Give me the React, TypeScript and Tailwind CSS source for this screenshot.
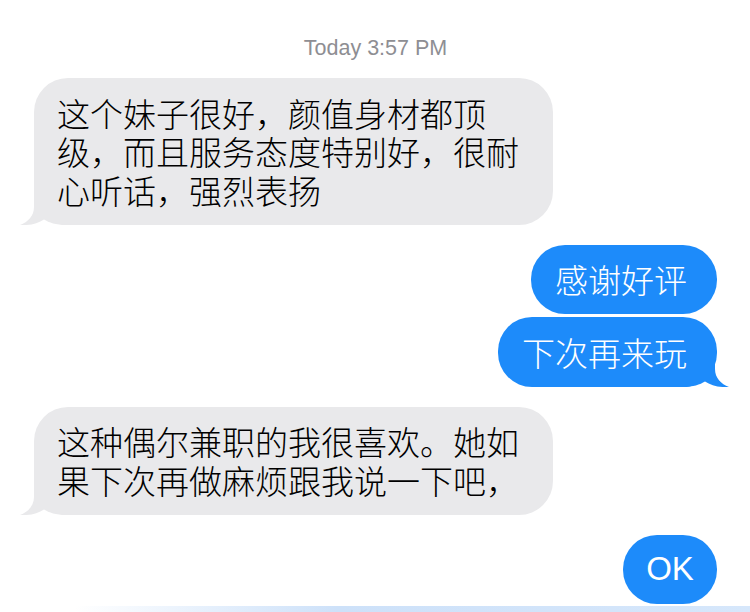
const cjk = '"Noto Sans CJK SC", "Noto Sans", sans-serif';

function Tail({ color, side }: { color: string; side: 'left' | 'right' }) {
  return (
    <svg
      width="50"
      height="34"
      viewBox="0 0 50 34"
      className={
        side === 'left'
          ? 'absolute bottom-0 left-[-14px]'
          : 'absolute bottom-0 right-[-12px] -scale-x-100'
      }
    >
      <path
        d="M14 0 L14 16 C14 25 8 31 0 34 C10 34.6 18 32.5 24 28.5 C29 31.5 36 34 46 34 L50 34 L50 0 Z"
        fill={color}
      />
    </svg>
  );
}

function Received({ text, className = '' }: { text: string; className?: string }) {
  return (
    <div
      className={`relative w-[519px] rounded-[34px] bg-[#e9e9eb] pl-[23px] pr-[28px] py-[15.5px] text-[33px] font-light leading-[38.5px] text-black ${className}`}
      style={{ fontFamily: cjk }}
    >
      <Tail color="#e9e9eb" side="left" />
      <span className="relative">{text}</span>
    </div>
  );
}

function Sent({
  text,
  tail = false,
  latin = false,
  className = '',
}: {
  text: string;
  tail?: boolean;
  latin?: boolean;
  className?: string;
}) {
  return (
    <div
      className={`relative self-end rounded-[34px] bg-[#1d8bfa] py-[15.5px] text-[33px] leading-[38.5px] text-white ${
        latin ? 'px-[23px] font-normal' : 'pl-[24px] pr-[30px] font-light'
      } ${className}`}
      style={{ fontFamily: latin ? '"Liberation Sans", Arial, sans-serif' : cjk }}
    >
      {tail && <Tail color="#1d8bfa" side="right" />}
      <span className="relative">{text}</span>
    </div>
  );
}

export default function App() {
  return (
    <div className="h-[612px] w-[750px] overflow-hidden bg-white">
      <div className="flex flex-col pl-[34px] pr-[33px] pt-[36px]">
        {/* timestamp */}
        <div
          className="text-center text-[21.5px] leading-[25px] text-[#8e8e93]"
          style={{ fontFamily: '"Liberation Sans", Arial, sans-serif' }}
        >
          Today 3:57 PM
        </div>

        <Received className="mt-[17px]" text="这个妹子很好，颜值身材都顶级，而且服务态度特别好，很耐心听话，强烈表扬" />

        <Sent className="mt-[20px]" text="感谢好评" />
        <Sent className="mt-[3px]" text="下次再来玩" tail />

        <Received className="mt-[20px]" text="这种偶尔兼职的我很喜欢。她如果下次再做麻烦跟我说一下吧，" />

        <Sent className="mt-[20px] w-[94px] text-center" text="OK" latin />
      </div>

      {/* keyboard edge glow */}
      <div className="mt-[2px] h-[8px] w-full bg-linear-to-r from-white from-[10%] via-[#cde1f9] via-[45%] to-[#d6e7fb]" />
    </div>
  );
}
